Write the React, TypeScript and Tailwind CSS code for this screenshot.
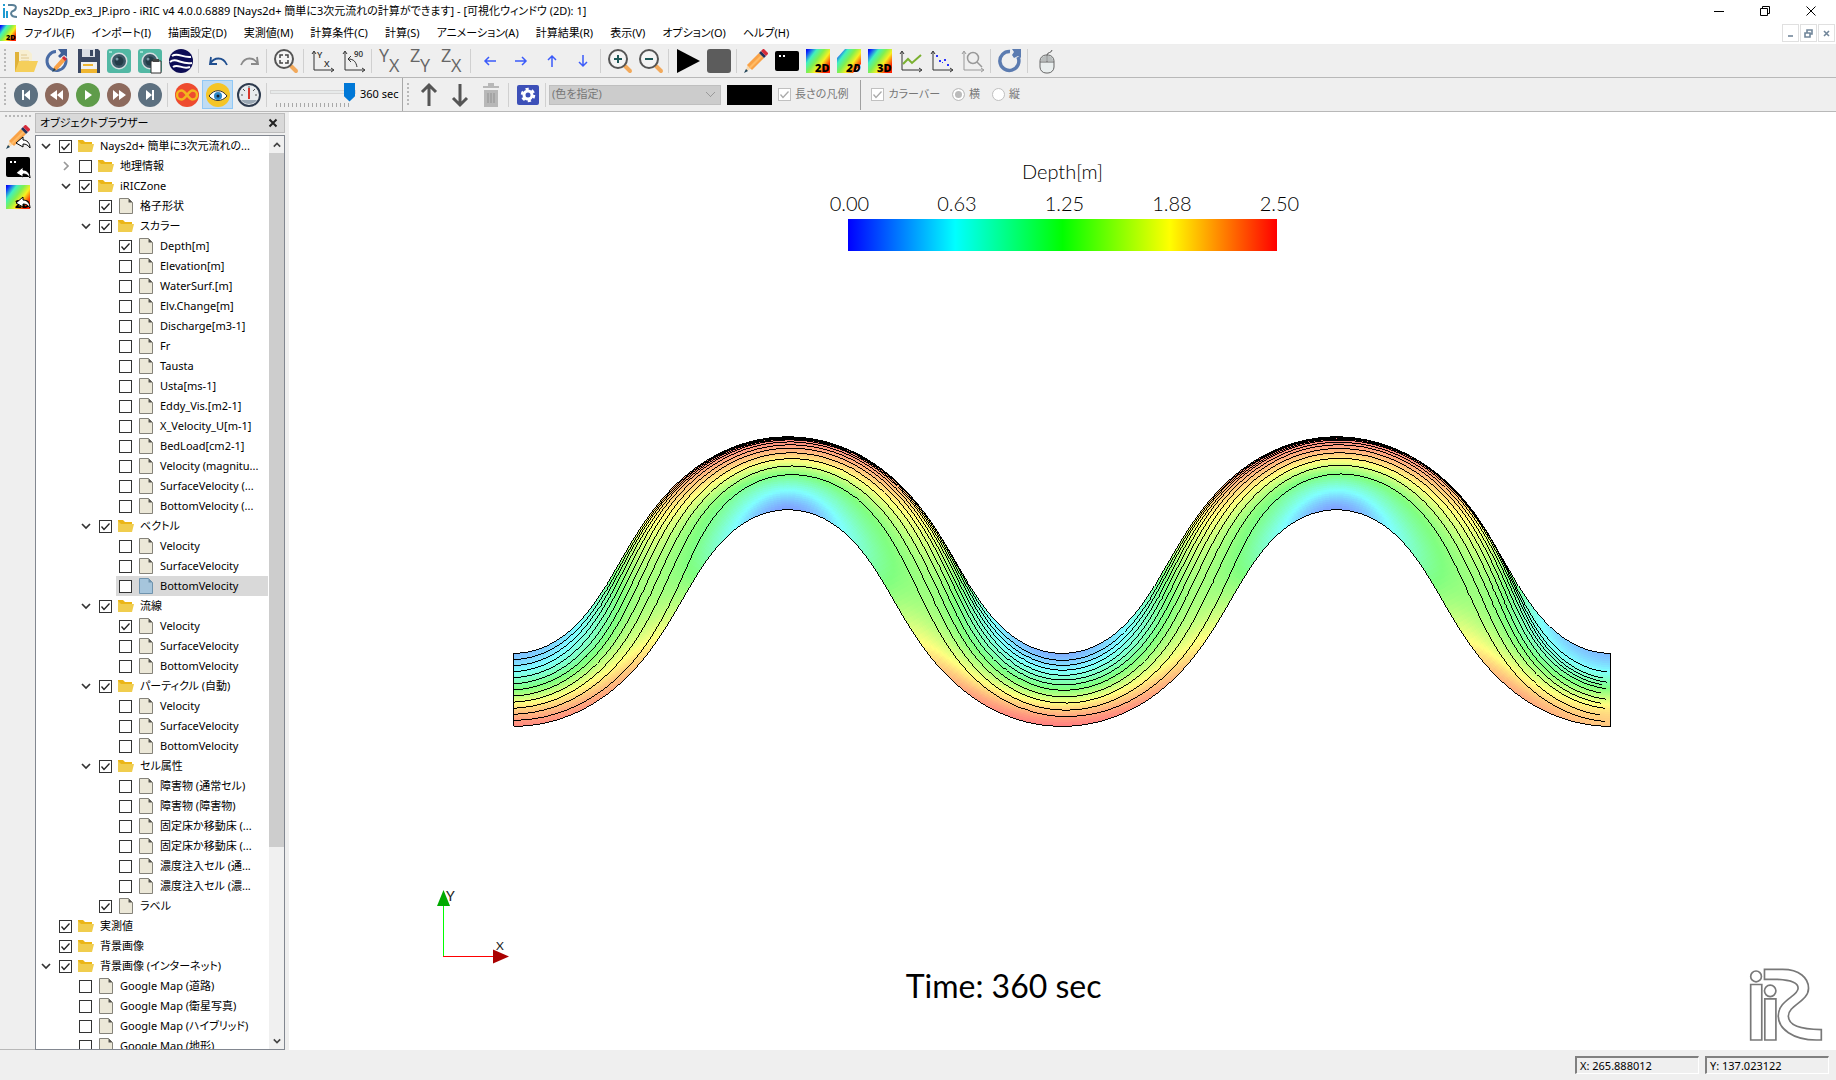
import type { ReactNode } from "react"
import clsx from "clsx"

type Node = {
  depth: 0 | 1 | 2 | 3
  label: string
  kind: "folder" | "file"
  checked?: boolean
  arrow?: "open" | "closed"
  selected?: boolean
}

const folder = (depth: Node["depth"], label: string, checked: boolean, arrow?: Node["arrow"]): Node => ({
  depth,
  label,
  kind: "folder",
  checked,
  arrow,
})
const file = (depth: Node["depth"], label: string, checked = false, selected = false): Node => ({
  depth,
  label,
  kind: "file",
  checked,
  selected,
})

const tree: Node[] = [
  folder(0, "Nays2d+ 簡単に3次元流れの...", true, "open"),
  folder(1, "地理情報", false, "closed"),
  folder(1, "iRICZone", true, "open"),
  file(2, "格子形状", true),
  folder(2, "スカラー", true, "open"),
  file(3, "Depth[m]", true),
  file(3, "Elevation[m]"),
  file(3, "WaterSurf.[m]"),
  file(3, "Elv.Change[m]"),
  file(3, "Discharge[m3-1]"),
  file(3, "Fr"),
  file(3, "Tausta"),
  file(3, "Usta[ms-1]"),
  file(3, "Eddy_Vis.[m2-1]"),
  file(3, "X_Velocity_U[m-1]"),
  file(3, "BedLoad[cm2-1]"),
  file(3, "Velocity (magnitu..."),
  file(3, "SurfaceVelocity (..."),
  file(3, "BottomVelocity (..."),
  folder(2, "ベクトル", true, "open"),
  file(3, "Velocity"),
  file(3, "SurfaceVelocity"),
  file(3, "BottomVelocity", false, true),
  folder(2, "流線", true, "open"),
  file(3, "Velocity", true),
  file(3, "SurfaceVelocity"),
  file(3, "BottomVelocity"),
  folder(2, "パーティクル (自動)", true, "open"),
  file(3, "Velocity"),
  file(3, "SurfaceVelocity"),
  file(3, "BottomVelocity"),
  folder(2, "セル属性", true, "open"),
  file(3, "障害物 (通常セル)"),
  file(3, "障害物 (障害物)"),
  file(3, "固定床か移動床 (..."),
  file(3, "固定床か移動床 (..."),
  file(3, "濃度注入セル (通..."),
  file(3, "濃度注入セル (濃..."),
  file(2, "ラベル", true),
  folder(0, "実測値", true),
  folder(0, "背景画像", true),
  folder(0, "背景画像 (インターネット)", true, "open"),
  file(1, "Google Map (道路)"),
  file(1, "Google Map (衛星写真)"),
  file(1, "Google Map (ハイブリッド)"),
  file(1, "Google Map (地形)"),
]

const indents = ["pl-0", "pl-5", "pl-10", "pl-15"]

const menus = [
  "ファイル(F)",
  "インポート(I)",
  "描画設定(D)",
  "実測値(M)",
  "計算条件(C)",
  "計算(S)",
  "アニメーション(A)",
  "計算結果(R)",
  "表示(V)",
  "オプション(O)",
  "ヘルプ(H)",
]

/* ---------- channel geometry and depth field ---------- */

// Sine-generated meander: two wavelengths, 60 degree maximum angle
const WAVE = 549
const HALF_WIDTH = 36.5
const THETA = 1.045
const STEPS = 320
const LANES = 36

const center = (() => {
  const n = STEPS * 4
  const raw = [{ x: 0, y: 0, a: 0 }]
  for (let i = 0; i < n; i++) {
    const mid = THETA * Math.sin(((i + 0.5) / n) * 4 * Math.PI)
    const p = raw[i]
    raw.push({
      x: p.x + Math.cos(mid),
      y: p.y - Math.sin(mid),
      a: THETA * Math.sin(((i + 1) / n) * 4 * Math.PI),
    })
  }
  const k = (WAVE * 2) / raw[n].x
  return raw.map((p) => ({ x: p.x * k, y: p.y * k + 254, a: p.a }))
})()

// s runs 0..2 (wavelengths), n runs 0 (upper bank) .. 1 (lower bank)
function point(s: number, n: number) {
  const p = center[Math.min(center.length - 1, Math.round((s / 2) * (center.length - 1)))]
  const d = (n - 0.5) * 2 * HALF_WIDTH
  return `${(p.x + Math.sin(p.a) * d + 0.5).toFixed(1)},${(p.y + Math.cos(p.a) * d).toFixed(1)}`
}

function spline(v: number[], t: number) {
  const i = Math.min(v.length - 2, Math.max(0, Math.floor(t)))
  const f = t - i
  const b = v[i]
  const c = v[i + 1]
  const a = v[i - 1] ?? b
  const d = v[i + 2] ?? c
  return b + 0.5 * f * (c - a + f * (2 * a - 5 * b + 4 * c - d + f * (3 * (b - c) + d - a)))
}

// Depth every 1/8 wavelength at n = 0, .25, .5, .75, 1
const wave = [
  [0.22, 0.64, 1.28, 2.05, 2.5],
  [0.56, 0.85, 1.35, 1.85, 2.25],
  [1.35, 1.45, 1.45, 1.42, 1.5],
  [2.3, 1.95, 1.42, 1.08, 0.7],
  [2.5, 2.1, 1.32, 0.6, 0.16],
  [2.3, 1.92, 1.4, 1.03, 0.68],
  [1.4, 1.45, 1.4, 1.37, 1.4],
  [0.5, 0.85, 1.32, 1.82, 2.25],
]
const inlet = [0.3, 0.63, 1.27, 2.05, 2.45]
const outlet = [0.28, 0.62, 1.3, 1.95, 2.15]
const sections = [inlet, ...wave.slice(1), ...wave, outlet]

function depthAt(s: number, n: number) {
  const row = [0, 1, 2, 3, 4].map((j) => spline(sections.map((r) => r[j]), s * 8))
  return Math.max(0, Math.min(2.5, spline(row, n * 4)))
}

const stops = [
  [0, 0, 255],
  [0, 255, 255],
  [0, 255, 0],
  [255, 255, 0],
  [255, 0, 0],
]

function color(depth: number) {
  const t = (depth / 2.5) * 4
  const i = Math.min(3, Math.floor(t))
  const c = stops[i].map((v, k) => Math.round((v + (stops[i + 1][k] - v) * (t - i) + 255) / 2))
  return `rgb(${c.join(",")})`
}

const cells = Array.from({ length: STEPS * LANES }, (_, k) => {
  const i = Math.floor(k / LANES)
  const j = k % LANES
  const s0 = (i / STEPS) * 2
  const s1 = ((i + 1) / STEPS) * 2
  const n0 = j / LANES
  const n1 = (j + 1) / LANES
  return {
    points: [point(s0, n0), point(s1, n0), point(s1, n1), point(s0, n1)].join(" "),
    fill: color(depthAt((s0 + s1) / 2, (n0 + n1) / 2)),
  }
})

// Lateral position of each streamline every 1/4 wavelength
const streamlines = [
  [0.083, 0.03, 0.008, 0.01, 0.095, 0.03, 0.008, 0.008, 0.26],
  [0.167, 0.06, 0.016, 0.03, 0.164, 0.06, 0.016, 0.02, 0.35],
  [0.25, 0.1, 0.028, 0.055, 0.23, 0.1, 0.03, 0.04, 0.4],
  [0.333, 0.15, 0.042, 0.085, 0.3, 0.145, 0.045, 0.07, 0.445],
  [0.417, 0.21, 0.07, 0.125, 0.364, 0.2, 0.075, 0.11, 0.49],
  [0.5, 0.28, 0.11, 0.17, 0.43, 0.265, 0.11, 0.16, 0.56],
  [0.583, 0.36, 0.155, 0.23, 0.505, 0.34, 0.16, 0.22, 0.635],
  [0.667, 0.46, 0.22, 0.3, 0.595, 0.43, 0.22, 0.29, 0.7],
  [0.75, 0.57, 0.3, 0.39, 0.68, 0.54, 0.295, 0.38, 0.76],
  [0.833, 0.7, 0.4, 0.5, 0.777, 0.67, 0.39, 0.49, 0.86],
  [0.917, 0.87, 0.52, 0.64, 0.864, 0.84, 0.51, 0.63, 0.94],
]

function linePoints(v: number[], until = STEPS) {
  return Array.from({ length: until + 1 }, (_, i) => point((i / STEPS) * 2, spline(v, i / (STEPS / 8)))).join(" ")
}

function Channel() {
  return (
    <svg viewBox="0 0 1099 292" className="w-[71%]" role="img" aria-label="Depth and streamlines">
      <g shapeRendering="crispEdges">
        {cells.map((c, i) => (
          <polygon key={i} points={c.points} fill={c.fill} stroke={c.fill} strokeWidth="0.6" />
        ))}
      </g>
      <g fill="none" stroke="#000" strokeWidth="1" shapeRendering="crispEdges">
        {streamlines.map((v, i) => (
          <polyline key={i} points={linePoints(v, STEPS - 1 - (i % 2))} />
        ))}
        <polygon points={`${linePoints([0, 0])} ${linePoints([1, 1]).split(" ").reverse().join(" ")}`} />
      </g>
    </svg>
  )
}

/* ---------- icons ---------- */

function Icon({ children, size = "size-6" }: { children: ReactNode; size?: string }) {
  return (
    <svg viewBox="0 0 24 24" className={clsx(size, "overflow-visible")} fill="none" aria-hidden="true">
      {children}
    </svg>
  )
}

const Pencil = () => (
  <>
    <path d="M1 23l3-8 4 4z" fill="#f8d9b0" />
    <path d="M0 24l2-4 2 2z" fill="#1c4257" />
    <path d="M3 16L15 4l5 5L8 21z" fill="#f9a247" />
    <path d="M5 18L17 6l1.500 1.500L6.500 19.500z" fill="#ffbb66" />
    <path d="M15 4l2-2 5 5-2 2z" fill="#22315c" />
    <path d="M17 2l2-2h1l4 4v1l-2 2z" fill="#d62b3a" />
  </>
)

const Spectrum = ({ id }: { id: string }) => (
  <defs>
    <linearGradient id={id} x1="0" y1="0" x2="1" y2="0.75">
      <stop offset="0" stopColor="#0000e0" />
      <stop offset="0.1" stopColor="#1030ff" />
      <stop offset="0.3" stopColor="#40f0c0" />
      <stop offset="0.5" stopColor="#80f050" />
      <stop offset="0.7" stopColor="#f8f020" />
      <stop offset="0.95" stopColor="#ff2000" />
    </linearGradient>
  </defs>
)

const View = ({ id, text, skew = false }: { id: string; text: string; skew?: boolean }) => (
  <>
    <Spectrum id={id} />
    <path d={skew ? "M8 0h16v15l-8 9H0V9z" : "M0 0h24v24H0z"} fill={`url(#${id})`} />
    <text x="23.500" y="23" textAnchor="end" fontSize="11" fontWeight="800" fontStyle={skew ? "italic" : "normal"} fontFamily="Open Sans, sans-serif" fill="#000">
      {text}
    </text>
  </>
)

const Camera = () => (
  <>
    <rect width="24" height="24" rx="3" fill="#52b8a4" />
    <rect x="2" y="2" width="3" height="2" fill="#9ee0d3" />
    <circle cx="12" cy="12" r="8.500" fill="#d6dde0" />
    <circle cx="12" cy="12" r="7" fill="#3c5866" />
    <circle cx="12" cy="12" r="4.500" fill="#243b47" />
    <circle cx="10" cy="10" r="1.500" fill="#7b97a5" />
  </>
)

const Lens = () => (
  <>
    <path d="M17 17l5 5" stroke="#f2a95b" strokeWidth="4" strokeLinecap="round" />
    <circle cx="10" cy="10" r="9" fill="#f4f4f4" stroke="#555" strokeWidth="2" />
  </>
)

const AxisArrows = ({ stroke = "#333" }: { stroke?: string }) => (
  <path d="M3 21V3M1 5l2-3 2 3M3 21h19M20 19l3 2-3 2" stroke={stroke} />
)

const Letters = ({ a, b }: { a: string; b: string }) => (
  <g fontFamily="Open Sans, sans-serif" fontSize="18" fill="#666">
    <text x="0" y="13">{a}</text>
    <text x="10" y="23">{b}</text>
  </g>
)

const Arrow = ({ turn }: { turn: number }) => (
  <path d="M7 12h11M11 8l-4 4 4 4" stroke="#3b5bfa" strokeWidth="1.500" transform={`rotate(${turn} 12 12)`} />
)

const Undo = ({ stroke, flip = false }: { stroke: string; flip?: boolean }) => (
  <path
    d="M5 8l-1 7h7M4 15c4-7 13-8 17 1"
    stroke={stroke}
    strokeWidth="1.800"
    transform={flip ? "matrix(-1 0 0 1 25 0)" : undefined}
  />
)

const Disc = ({ fill, children }: { fill: string; children: ReactNode }) => (
  <>
    <circle cx="12" cy="12" r="12" fill={fill} />
    <g fill="#fff">{children}</g>
  </>
)

const Reply = () => (
  <path d="M10 18l7-6v3c4 0 7 3 7 8-2-3-4-4-7-4v3z" fill="#fff" stroke="#000" />
)

const Reload = () => (
  <>
    <path d="M12 2.500A9.500 9.500 0 1 0 20 8" stroke="#5b7bb0" strokeWidth="3.500" />
    <path d="M14 0h9v9l-3-2-4 2-2-3 2-3z" fill="#5b7bb0" />
  </>
)

type Tool = { label: string; icon: ReactNode } | "sep"

const mainTools: Tool[] = [
  {
    label: "開く",
    icon: (
      <>
        <path d="M1 3h7l2 2h5v18H1z" fill="#e0b23a" />
        <path d="M5 1h9l4 4v13H5z" fill="#f7efd2" />
        <path d="M7 6h6M7 9h8M7 12h8" stroke="#e0c890" />
        <path d="M5 12h19l-4 11H1z" fill="#f5cf5b" />
      </>
    ),
  },
  {
    label: "再読み込み",
    icon: (
      <>
        <path d="M11 2.500A9.500 9.500 0 1 0 20.500 9" stroke="#4a6ca5" strokeWidth="3" />
        <path d="M13 0h9v8l-3-2-4 3-2-2 3-3z" fill="#3f5f96" />
        <path d="M8 22l1-4 9-10 3 3-9 10z" fill="#f9a247" />
        <path d="M17 9l2-2 3 3-2 2z" fill="#d62b3a" />
        <path d="M7 23l2-4 2 2z" fill="#1c4257" />
      </>
    ),
  },
  {
    label: "保存",
    icon: (
      <>
        <path d="M2 0h20l2 2v22H2z" fill="#3b4863" />
        <path d="M6 0h13v8H6z" fill="#dcdfe6" />
        <path d="M14 1h3v6h-3z" fill="#3b4863" />
        <path d="M5 13h16v11H5z" fill="#f1f1f1" />
        <path d="M7 15h10v2H7zM5 20h16v4H5z" fill="#f0b631" />
      </>
    ),
  },
  { label: "スナップショット", icon: <Camera /> },
  {
    label: "スナップショットをコピー",
    icon: (
      <>
        <Camera />
        <path d="M13 12h10v12H13z" fill="#fff" stroke="#333" />
        <path d="M15 10h6v3h-6z" fill="#444" />
      </>
    ),
  },
  {
    label: "Google Earth",
    icon: (
      <>
        <circle cx="12" cy="12" r="12" fill="#0d0d55" />
        <path d="M3 7c6-4 10 2 19 1M1 13c6-5 11 3 22 1M4 18c5-4 9 3 17 0" stroke="#fff" strokeWidth="2" />
      </>
    ),
  },
  "sep",
  { label: "元に戻す", icon: <Undo stroke="#1f4e8f" /> },
  { label: "やり直し", icon: <Undo stroke="#8a8a8a" flip /> },
  "sep",
  {
    label: "全体表示",
    icon: (
      <>
        <Lens />
        <path d="M6 9V6h3M11 6h3v3M14 11v3h-3M9 14H6v-3" stroke="#444" strokeWidth="1.500" />
      </>
    ),
  },
  "sep",
  {
    label: "回転をリセット",
    icon: (
      <>
        <AxisArrows />
        <g fontFamily="Open Sans, sans-serif" fontSize="9" fontWeight="600" fill="#333">
          <text x="6" y="9">Y</text>
          <text x="13" y="18">X</text>
        </g>
      </>
    ),
  },
  {
    label: "90度回転",
    icon: (
      <>
        <AxisArrows />
        <path d="M6 10c6 0 8 3 9 8M9 7l-3 3 3 3" stroke="#333" />
        <text x="12" y="8" fontFamily="Open Sans, sans-serif" fontSize="8" fontWeight="600" fill="#333">90</text>
      </>
    ),
  },
  "sep",
  { label: "XY平面", icon: <Letters a="Y" b="X" /> },
  { label: "YZ平面", icon: <Letters a="Z" b="Y" /> },
  { label: "ZX平面", icon: <Letters a="Z" b="X" /> },
  "sep",
  { label: "左へ", icon: <Arrow turn={0} /> },
  { label: "右へ", icon: <Arrow turn={180} /> },
  { label: "上へ", icon: <Arrow turn={90} /> },
  { label: "下へ", icon: <Arrow turn={-90} /> },
  "sep",
  {
    label: "拡大",
    icon: (
      <>
        <Lens />
        <path d="M6 10h8M10 6v8" stroke="#1c5757" strokeWidth="2" />
      </>
    ),
  },
  {
    label: "縮小",
    icon: (
      <>
        <Lens />
        <path d="M6 10h8" stroke="#1c5757" strokeWidth="2" />
      </>
    ),
  },
  "sep",
  { label: "計算を実行", icon: <path d="M1 0l23 12L1 24z" fill="#000" /> },
  { label: "計算を停止", icon: <rect width="24" height="24" rx="3" fill="#5c5c5c" /> },
  "sep",
  { label: "プリプロセッサー", icon: <Pencil /> },
  {
    label: "ソルバーコンソール",
    icon: (
      <>
        <rect y="2" width="24" height="20" rx="2" fill="#000" />
        <path d="M4 6h2v2H4zM8 6h2v2H8z" fill="#fff" />
      </>
    ),
  },
  { label: "2D 可視化", icon: <View id="v2" text="2D" /> },
  { label: "2D 鳥瞰図", icon: <View id="vb" text="2D" skew /> },
  { label: "3D 可視化", icon: <View id="v3" text="3D" /> },
  {
    label: "グラフ",
    icon: (
      <>
        <AxisArrows />
        <path d="M4 15l5-5 4 4 9-8" stroke="#7ab030" strokeWidth="2" />
      </>
    ),
  },
  {
    label: "散布図",
    icon: (
      <>
        <AxisArrows />
        <path d="M6 6h2v2H6zM9 11h2v2H9zM14 10h2v2h-2zM17 15h2v2h-2zM12 13h1v1h-1z" fill="#2b33ff" />
      </>
    ),
  },
  {
    label: "検証",
    icon: (
      <>
        <AxisArrows stroke="#999" />
        <circle cx="12" cy="9" r="5.500" stroke="#999" strokeWidth="1.500" />
        <path d="M16 13l5 5" stroke="#999" strokeWidth="1.500" />
      </>
    ),
  },
  "sep",
  { label: "更新", icon: <Reload /> },
  "sep",
  {
    label: "マウスヒント",
    icon: (
      <>
        <path d="M12 6C12 3 17 4 17 1" stroke="#555" />
        <rect x="5" y="6" width="14" height="18" rx="6" fill="#e9eeee" stroke="#666" />
        <path d="M6 12c0-4 2-5 5-5v5zM18 12c0-4-2-5-5-5v5z" fill="#b8bcbc" />
        <path d="M5 13h14M12 6v7" stroke="#666" />
      </>
    ),
  },
]

const playTools: Tool[] = [
  { label: "最初へ", icon: <Disc fill="#5d7080"><path d="M8 7h2v10H8zM16 7v10l-6-5z" /></Disc> },
  { label: "前へ", icon: <Disc fill="#8d6a5d"><path d="M12 7v10l-7-5zM18 7v10l-6-5z" /></Disc> },
  { label: "再生", icon: <Disc fill="#5f9c4a"><path d="M9 7v10l7-5z" /></Disc> },
  { label: "次へ", icon: <Disc fill="#8d6a5d"><path d="M6 7v10l6-5zM12 7v10l7-5z" /></Disc> },
  { label: "最後へ", icon: <Disc fill="#5d7080"><path d="M14 7h2v10h-2zM8 7v10l6-5z" /></Disc> },
  "sep",
  {
    label: "ループ",
    icon: (
      <>
        <circle cx="12" cy="12" r="12" fill="#ee4b2f" />
        <path d="M12 12c-3-4-4-4.500-5.500-4.500a4.500 4.500 0 0 0 0 9C8 16.500 9 16 12 12s4-4.500 5.500-4.500a4.500 4.500 0 0 1 0 9C16 16.500 15 16 12 12z" stroke="#f3b51e" strokeWidth="2.500" />
      </>
    ),
  },
  {
    label: "追従",
    icon: (
      <>
        <circle cx="12" cy="12" r="12" fill="#f5c526" />
        <path d="M3 13c5-7 13-7 18 0-5 6-13 6-18 0z" fill="#fff" stroke="#333" />
        <circle cx="12" cy="13" r="4" fill="#2d87c8" />
        <circle cx="12" cy="13" r="1.500" fill="#123" />
      </>
    ),
  },
  {
    label: "速度",
    icon: (
      <>
        <circle cx="12" cy="12" r="11" fill="#e8ecef" stroke="#2e3b4e" strokeWidth="2" />
        <path d="M12 3v3M4 12h2M18 12h2M6 6l2 2M18 6l-2 2" stroke="#555" />
        <path d="M4 17h16a10 10 0 0 1-16 0z" fill="#9aa7b3" />
        <path d="M11 5h2v11h-2z" fill="#d8382e" />
      </>
    ),
  },
]

const editTools: Tool[] = [
  { label: "上へ移動", icon: <path d="M12 23V3M5 9l7-7 7 7" stroke="#555" strokeWidth="3" /> },
  { label: "下へ移動", icon: <path d="M12 1v20M5 15l7 7 7-7" stroke="#555" strokeWidth="3" /> },
  {
    label: "削除",
    icon: (
      <>
        <path d="M4 3h16v2H4zM9 0h6v3H9zM5 7h14v17H5z" fill="#b8b8b8" />
        <path d="M9 10v10M12 10v10M15 10v10" stroke="#929292" />
      </>
    ),
  },
  "sep",
  {
    label: "設定",
    icon: (
      <>
        <rect x="1" y="2" width="22" height="20" rx="2" fill="#3d50b8" />
        <circle cx="12" cy="12" r="4" stroke="#fff" strokeWidth="3" />
        <circle cx="12" cy="12" r="6" stroke="#fff" strokeWidth="2.500" strokeDasharray="3.140 3.140" />
      </>
    ),
  },
  "sep",
]

function Tools({ items, pressed }: { items: Tool[]; pressed?: string }) {
  return (
    <>
      {items.map((t, i) =>
        t === "sep" ? (
          <span key={i} className="mx-[2px] h-6 w-[2px] border-l border-[#d0d0d0]" />
        ) : (
          <button
            key={i}
            type="button"
            aria-label={t.label}
            className={clsx(
              "flex h-[29px] w-[31px] shrink-0 items-center justify-center",
              pressed === t.label && "border border-[#90c8f6] bg-[#c0dcf3]"
            )}
          >
            <Icon>{t.icon}</Icon>
          </button>
        )
      )}
    </>
  )
}

const Grip = () => <span className="mx-1 h-6 w-[2px] shrink-0 bg-[repeating-linear-gradient(#b8b8b8_0_2px,transparent_2px_4px)]" />

/* ---------- controls ---------- */

function Check({ id, checked, disabled = false }: { id: string; checked?: boolean; disabled?: boolean }) {
  return (
    <span className="grid size-[13px] shrink-0 place-items-center">
      <input
        id={id}
        type="checkbox"
        defaultChecked={checked}
        disabled={disabled}
        className="peer col-start-1 row-start-1 size-[13px] appearance-none border border-[#333] bg-white disabled:border-[#c0c0c0]"
      />
      <svg viewBox="0 0 13 13" className="pointer-events-none invisible col-start-1 row-start-1 size-[13px] text-[#222] peer-checked:visible peer-disabled:text-[#aaa]">
        <path d="M2.500 6.500L5 9.500l5.500-6" fill="none" stroke="currentColor" strokeWidth="1.300" />
      </svg>
    </span>
  )
}

function Radio({ id, checked }: { id: string; checked?: boolean }) {
  return (
    <input
      id={id}
      type="radio"
      name="orientation"
      defaultChecked={checked}
      disabled
      className="size-[13px] appearance-none rounded-full border border-[#c0c0c0] bg-white checked:bg-[#bbb] checked:shadow-[inset_0_0_0_2px_#fff]"
    />
  )
}

function TreeRow({ node, index }: { node: Node; index: number }) {
  const id = `node-${index}`
  return (
    <li className={clsx("flex h-5 shrink-0", indents[node.depth])}>
      <span className="flex w-5 shrink-0 items-center justify-center">
        {node.arrow && (
          <button type="button" aria-label={node.arrow === "open" ? "折りたたむ" : "展開"}>
            <svg viewBox="0 0 10 10" className={clsx("size-[10px]", node.arrow === "closed" ? "-rotate-90 text-[#999]" : "text-[#333]")}>
              <path d="M1 3l4 4 4-4" fill="none" stroke="currentColor" strokeWidth="1.700" />
            </svg>
          </button>
        )}
      </span>
      <div className={clsx("flex min-w-0 flex-1 items-center gap-1.5 pl-[3px]", node.selected && "bg-[#d9d9d9]")}>
        <Check id={id} checked={node.checked} />
        <svg viewBox="0 0 16 16" className="size-4 shrink-0" aria-hidden="true">
          {node.kind === "folder" ? (
            <>
              <path d="M0 2h5l2 2h7v4H0z" fill="#ebb616" />
              <path d="M0 14V3l3 3h13l-2 8z" fill="#f0cd4e" />
            </>
          ) : (
            <>
              <path d="M1.500.5h9l4 4v11h-13z" fill={node.selected ? "#a6c5dc" : "#ece8d8"} stroke={node.selected ? "#6f93ad" : "#85837a"} />
              <path d="M10.500.5v4h4z" fill={node.selected ? "#6f93ad" : "#55534c"} />
            </>
          )}
        </svg>
        <label htmlFor={id} className="leading-5 whitespace-pre">
          {node.label}
        </label>
      </div>
    </li>
  )
}

function ObjectBrowser() {
  return (
    <aside className="flex w-[250px] shrink-0 flex-col pt-px">
      <header className="flex h-5 items-center justify-between border border-[#bcbcbc] bg-[#d9d9d9] pl-1">
        <h2 className="leading-4">オブジェクトブラウザー</h2>
        <button type="button" aria-label="閉じる" className="mr-1.5">
          <svg viewBox="0 0 10 10" className="size-[10px]">
            <path d="M1.500 1.500l7 7M8.500 1.500l-7 7" stroke="#222" strokeWidth="2" />
          </svg>
        </button>
      </header>
      <div className="mt-[2px] flex min-h-0 flex-1 border border-[#828790] bg-white">
        <ul className="min-w-0 flex-1 overflow-hidden">
          {tree.map((node, i) => (
            <TreeRow key={i} node={node} index={i} />
          ))}
        </ul>
        <div className="ml-px flex w-[15px] flex-col bg-[#f0f0f0]">
          <button type="button" aria-label="上へスクロール" className="flex h-[17px] items-center justify-center">
            <svg viewBox="0 0 10 10" className="size-2">
              <path d="M1 7l4-4 4 4" fill="none" stroke="#444" strokeWidth="2" />
            </svg>
          </button>
          <div className="flex-1">
            <div className="h-[79%] bg-[#cdcdcd]" />
          </div>
          <button type="button" aria-label="下へスクロール" className="flex h-[17px] items-center justify-center">
            <svg viewBox="0 0 10 10" className="size-2">
              <path d="M1 3l4 4 4-4" fill="none" stroke="#444" strokeWidth="2" />
            </svg>
          </button>
        </div>
      </div>
    </aside>
  )
}

function Legend() {
  return (
    <div className="flex flex-col items-center font-['Lato','Noto_Sans',sans-serif] text-xl leading-6 font-light">
      <p>Depth[m]</p>
      <div className="mt-2 flex w-[482px] justify-between pl-1">
        {["0.00", "0.63", "1.25", "1.88", "2.50"].map((v) => (
          <span key={v} className="w-12 text-center">
            {v}
          </span>
        ))}
      </div>
      <div className="mt-1 h-8 w-[429px] bg-[linear-gradient(to_right,#00f,#0ff_25%,#0f0_50%,#ff0_75%,#f00)]" />
    </div>
  )
}

function Viewport() {
  return (
    <main className="flex min-w-0 flex-1 flex-col items-center bg-white pt-[47px]">
      <Legend />
      <div className="flex w-full flex-1 items-start justify-center pt-[185px]">
        <Channel />
      </div>
      <div className="grid w-full grid-cols-[618fr_193fr_736fr] items-end">
        <svg viewBox="0 0 90 90" className="mb-20 ml-[141px] size-[90px]" aria-label="XY">
          <path d="M13.500 76V22" stroke="#0f0" />
          <path d="M13 76.500h52" stroke="#f00" />
          <path d="M13.500 10l6.500 16H7z" fill="#00aa00" />
          <path d="M79 76.500L63 69.500v14z" fill="#aa0000" />
          <g fontFamily="Lato, sans-serif" fontSize="14" fill="#222">
            <text x="16" y="21">Y</text>
            <text x="66" y="70" fontSize="12">X</text>
          </g>
        </svg>
        <p className="mb-[46px] text-center font-['Lato','Noto_Sans',sans-serif] text-[32px] leading-9 whitespace-nowrap">
          Time: 360 sec
        </p>
        <svg viewBox="640 85 220 220" className="mr-[13px] mb-2 size-[74px] justify-self-end" fill="none" stroke="#787878" strokeWidth="5" aria-label="iRIC">
          <circle cx="661" cy="110" r="16" />
          <path d="M645 134h33v165h-33zM687 177h33v122h-33z" />
          <circle cx="703" cy="153" r="17" />
          <path d="M686 89h54c50 0 77 26 77 56 0 40-60 50-60 83 0 27 33 40 98 40v31h-15c-70 0-113-34-113-71 0-48 59-58 59-83 0-15-21-24-61-26h-39z" />
        </svg>
      </div>
    </main>
  )
}

export default function App() {
  return (
    <div className="flex h-screen flex-col bg-[#efefef] font-['Noto_Sans','Noto_Sans_CJK_JP',sans-serif] text-[11px] text-black [font-feature-settings:'palt']">
      <header className="bg-white">
        <div className="flex h-[22px] items-center">
          <svg viewBox="0 0 16 16" className="ml-[2px] size-4" fill="none">
            <path d="M2 5v10M2 1v2M5 8v7" stroke="#1f9bd1" strokeWidth="2" />
            <path d="M6 2h4c6 0 4 5 1 6s-3 6 4 6" stroke="#5a7f96" strokeWidth="2" />
          </svg>
          <h1 className="ml-[5px] flex-1 whitespace-nowrap">Nays2Dp_ex3_JP.ipro - iRIC v4 4.0.0.6889 [Nays2d+ 簡単に3次元流れの計算ができます] - [可視化ウィンドウ (2D): 1]</h1>
          <div className="mr-[2px] flex">
            {[
              ["最小化", "M0 5.500h10"],
              ["元に戻す", "M.5 2.500h7v7h-7zM2.500 2.500v-2h7v7h-2"],
              ["閉じる", "M.5.5l9 9M9.500.5l-9 9"],
            ].map(([label, d]) => (
              <button key={label} type="button" aria-label={label} className="flex h-5 w-[46px] items-center justify-center">
                <svg viewBox="0 0 10 10" className="size-[10px]" fill="none" stroke="#000">
                  <path d={d} />
                </svg>
              </button>
            ))}
          </div>
        </div>
        <nav className="flex h-[23px] items-center border-b border-[#eee]">
          <svg viewBox="0 0 24 24" className="size-4 overflow-visible" aria-hidden="true">
            <View id="doc" text="2D" />
          </svg>
          <div className="ml-2 flex flex-1 gap-[17px]">
            {menus.map((m) => (
              <button key={m} type="button" className="whitespace-nowrap">
                {m}
              </button>
            ))}
          </div>
          <div className="mr-px flex gap-px">
            {[
              ["子ウィンドウを最小化", "M2 7h5"],
              ["子ウィンドウを元に戻す", "M1 4h5v4H1zM3 4V1h5v4H6"],
              ["子ウィンドウを閉じる", "M2 2l5 5M7 2L2 7"],
            ].map(([label, d]) => (
              <button key={label} type="button" aria-label={label} className="flex h-[18px] w-[17px] items-center justify-center border border-[#e0e0e0]">
                <svg viewBox="0 0 9 9" className="size-[9px]" fill="none" stroke="#71869a" strokeWidth="1.600">
                  <path d={d} />
                </svg>
              </button>
            ))}
          </div>
        </nav>
      </header>

      <div className="flex h-[33px] items-center border-b border-[#b8b8b8]">
        <Grip />
        <Tools items={mainTools} />
      </div>

      <div className="flex h-[34px] items-center border-b border-[#b8b8b8]">
        <Grip />
        <Tools items={playTools} pressed="追従" />
        <span className="mx-[2px] h-6 w-[2px] border-l border-[#d0d0d0]" />
        <div className="flex w-[86px] flex-col">
          <input
            type="range"
            aria-label="時刻"
            min={0}
            max={360}
            defaultValue={360}
            className="h-[19px] w-full appearance-none bg-transparent [&::-webkit-slider-runnable-track]:h-1 [&::-webkit-slider-runnable-track]:border [&::-webkit-slider-runnable-track]:border-[#d6d6d6] [&::-webkit-slider-runnable-track]:bg-[#e7eaea] [&::-webkit-slider-thumb]:-mt-[8px] [&::-webkit-slider-thumb]:h-[19px] [&::-webkit-slider-thumb]:w-[11px] [&::-webkit-slider-thumb]:appearance-none [&::-webkit-slider-thumb]:bg-[#0078d7] [&::-webkit-slider-thumb]:[clip-path:polygon(0_0,100%_0,100%_72%,50%_100%,0_72%)]"
          />
          <span className="mx-[6px] mt-[2px] h-1 bg-[repeating-linear-gradient(to_right,#a8a8a8_0_1px,transparent_1px_4px)]" />
        </div>
        <output className="ml-1 w-[42px] whitespace-nowrap">360 sec</output>
        <span className="h-full border-l border-[#a8a8a8]" />
        <Grip />
        <Tools items={editTools} />
        <select disabled aria-label="色" className="h-5 w-[172px] appearance-none border border-[#bfbfbf] bg-[#ccc] bg-[linear-gradient(45deg,transparent_45%,#999_45%_55%,transparent_55%),linear-gradient(-45deg,transparent_45%,#999_45%_55%,transparent_55%)] bg-[length:5px_5px] bg-[position:right_9px_center,right_5px_center] bg-no-repeat pl-[2px] text-[#777]">
          <option>(色を指定)</option>
        </select>
        <button type="button" aria-label="色の選択" className="ml-1.5 h-5 w-[45px] bg-black" />
        <div className="ml-1.5 flex items-center gap-1 text-[#777]">
          <Check id="length-legend" checked disabled />
          <label htmlFor="length-legend">長さの凡例</label>
        </div>
        <span className="ml-3 h-[30px] border-l border-[#a0a0a0]" />
        <div className="ml-2.5 flex items-center gap-1 text-[#777]">
          <Check id="color-bar" checked disabled />
          <label htmlFor="color-bar" className="mr-2">カラーバー</label>
          <Radio id="horizontal" checked />
          <label htmlFor="horizontal" className="mr-2">横</label>
          <Radio id="vertical" />
          <label htmlFor="vertical">縦</label>
        </div>
      </div>

      <div className="flex min-h-0 flex-1">
        <div className="flex w-[35px] shrink-0 flex-col items-center gap-[6px] border-b border-[#b8b8b8] pt-[3px]">
          <span className="h-[2px] w-[26px] bg-[repeating-linear-gradient(to_right,#b8b8b8_0_2px,transparent_2px_4px)]" />
          <button type="button" aria-label="プリプロセッサーに戻る" className="mt-[2px]">
            <Icon><Pencil /><Reply /></Icon>
          </button>
          <button type="button" aria-label="コンソールに戻る">
            <Icon>
              <rect y="2" width="24" height="20" rx="2" fill="#000" />
              <path d="M4 6h2v2H4zM8 6h2v2H8z" fill="#fff" />
              <Reply />
            </Icon>
          </button>
          <button type="button" aria-label="2D可視化に戻る">
            <Icon><View id="side" text="2D" /><Reply /></Icon>
          </button>
        </div>
        <ObjectBrowser />
        <div className="w-1 shrink-0" />
        <Viewport />
      </div>

      <footer className="flex h-[30px] shrink-0 items-center justify-end gap-[6px] pr-[7px]">
        {["X: 265.888012", "Y: 137.023122"].map((v) => (
          <span key={v} className="h-[18px] w-[124px] border-t-2 border-r border-b border-l-2 border-t-[#808080] border-r-white border-b-white border-l-[#808080] pl-[3px] leading-4">
            {v}
          </span>
        ))}
      </footer>
    </div>
  )
}
